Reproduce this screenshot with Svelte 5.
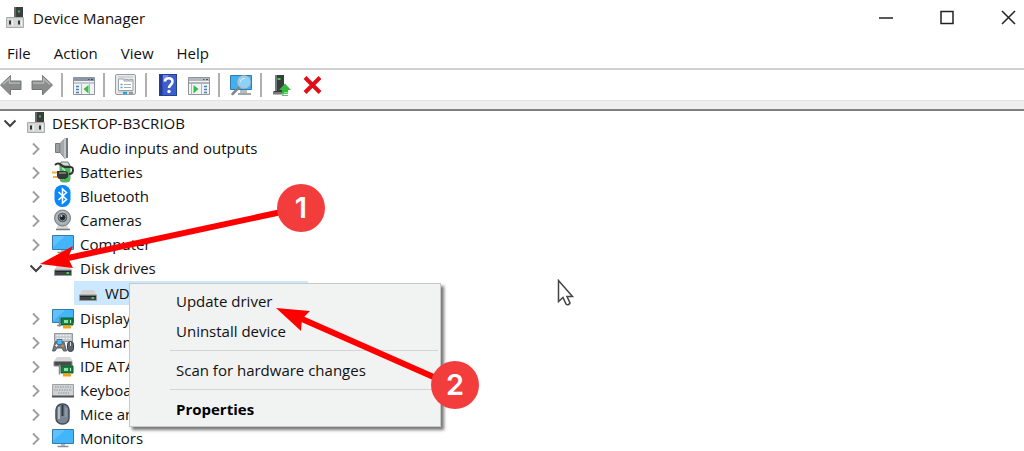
<script>
  // Device tree with the context menu open on the selected disk,
  // plus the two numbered steps drawn on top.
  const menus = ['File', 'Action', 'View', 'Help'];

  const tools = [
    { icon: 'back', label: 'Back' },
    { icon: 'forward', label: 'Forward' },
    null,
    { icon: 'console', label: 'Show or hide console tree' },
    null,
    { icon: 'props', label: 'Properties' },
    null,
    { icon: 'help', label: 'Help' },
    { icon: 'action', label: 'Show or hide action pane' },
    null,
    { icon: 'scan', label: 'Scan for hardware changes' },
    null,
    { icon: 'update', label: 'Update driver' },
    { icon: 'remove', label: 'Uninstall device' }
  ];

  let groups = $state([
    { icon: 'audio', name: 'Audio inputs and outputs' },
    { icon: 'battery', name: 'Batteries' },
    { icon: 'bluetooth', name: 'Bluetooth' },
    { icon: 'camera', name: 'Cameras' },
    { icon: 'computer', name: 'Computer' },
    { icon: 'disk', name: 'Disk drives', open: true, devices: ['WD'] },
    { icon: 'display', name: 'Display' },
    { icon: 'hid', name: 'Human' },
    { icon: 'ide', name: 'IDE ATA' },
    { icon: 'keyboard', name: 'Keyboards' },
    { icon: 'mouse', name: 'Mice and' },
    { icon: 'computer', name: 'Monitors' }
  ]);

  let rootOpen = $state(true);
</script>

{#snippet chevron(open)}
  <svg class="chevron" class:open width="14" height="14" viewBox="0 0 14 14" aria-hidden="true">
    {#if open}
      <path d="M1.500 4.500 7 10l5.500-5.500" />
    {:else}
      <path d="M4 2.500 9.500 8 4 13.500" />
    {/if}
  </svg>
{/snippet}

{#snippet board()}
  <path d="M9 11h12v7H9z" fill="#15803f" stroke="#0d5b2b" />
  <path d="M11 18.500h8v3h-8z" fill="#f2a11c" />
  <path d="M7.500 9.500v10" stroke="#888" stroke-width="1.500" />
  <path d="M12 13h4v3h-4z" fill="#8fe0a8" />
  <path d="M18.500 13v3" stroke="#bff0cc" />
{/snippet}

{#snippet icon(name)}
  <svg class="icon" width="22" height="22" viewBox="0 0 22 22" fill="none" aria-hidden="true">
    {#if name === 'root'}
      <path d="M10 0h9v11h-9z" fill="#3b3d3f" />
      <path d="M10 0h2v11h-2z" fill="#66696b" />
      <path d="M14 3.500h2v2h-2z" fill="#31c34a" />
      <path d="M2.500 10.500h17v10h-17z" fill="#d5d7d7" stroke="#a9abac" />
      <path d="M5 13.500h2v4H5zM14 13.500h2v4h-2z" fill="#333" />
      <path d="M8 13h1v6H8zM17 13h1v6h-1z" fill="#f4f4f4" />
    {:else if name === 'back' || name === 'forward'}
      <g transform={name === 'forward' ? 'matrix(-1 0 0 1 22 0)' : undefined}>
        <path d="M.5 11 10.500 1.500v5.500H21v8.500H10.500V21z" fill="#8b8d8d" stroke="#747676" />
        <path d="M3 10.500 9.500 4.500V9H20" stroke="#b5b7b7" stroke-width="1.500" />
      </g>
    {:else if name === 'console'}
      <path d="M.5 3.500h21v17H.5z" fill="#f2f3f4" stroke="#8e949a" />
      <path d="M1 4h20v3H1z" fill="#8896a6" />
      <path d="M15 5.500h1.500M18 5.500h2" stroke="#314e73" />
      <path d="M1 9h20" stroke="#c3c9ce" stroke-width="2" />
      <path d="M8.500 10v10M16.500 10v10" stroke="#b0b5b9" />
      <path d="M3 12.500h3M3 15.500h3M3 18.500h3" stroke="#477fb4" stroke-width="1.500" />
      <path d="M15.500 11v8.500L10.500 15z" fill="#31bf45" />
    {:else if name === 'action'}
      <path d="M.5 3.500h21v17H.5z" fill="#f2f3f4" stroke="#8e949a" />
      <path d="M1 4h20v3H1z" fill="#b3b9bf" />
      <path d="M15 5.500h1.500M18 5.500h2" stroke="#4e5a67" />
      <path d="M1 9h20" stroke="#aeb5bb" stroke-width="2" />
      <path d="M3.500 10v10M13.500 10v10" stroke="#b0b5b9" />
      <path d="M16 12.500h3M16 15.500h3M16 18.500h3" stroke="#477fb4" stroke-width="1.500" />
      <path d="M5.500 11v8.500l5-4.500z" fill="#31bf45" />
    {:else if name === 'props'}
      <rect x=".500" y=".500" width="20" height="20" rx="1.500" fill="#e8e9ea" stroke="#999d9f" />
      <path d="M3 3h15M3 18h15" stroke="#bdc1c3" />
      <path d="M3.500 7V5H9v2h9v9.500H3.500z" fill="#fff" stroke="#9ba1a5" />
      <path d="M9.500 5.500h4v1.500M14 5.500h4v1.500" stroke="#a7acb0" />
      <path d="M5.500 10.500h2M5.500 13.500h2" stroke="#44a4e8" stroke-width="1.500" />
      <path d="M9 10.500h7M9 13.500h7" stroke="#aaa" />
      <path d="M8 19h4" stroke="#23a5ef" stroke-width="2.500" />
      <path d="M14 19h4" stroke="#999" stroke-width="2" />
    {:else if name === 'help'}
      <rect x="2.500" y=".500" width="17" height="21" fill="#3d5fcb" stroke="#263f98" />
      <path d="M3 1h2.500v20H3z" fill="#233a96" />
      <path d="M6 1h6l-6 8z" fill="#718ae0" />
      <path d="M8 7.500C8 3 15.500 3 15.500 7.500c0 3-3.500 3.500-3.500 6.500" stroke="#fff" stroke-width="2.500" />
      <circle cx="12" cy="17.500" r="1.700" fill="#fff" />
    {:else if name === 'scan'}
      <path d="M.5 1.500h21v14H.5z" fill="#3fb1f1" stroke="#3479aa" />
      <path d="M10 16h7v3h-7z" fill="#b7bdc1" />
      <path d="M8 20h13" stroke="#a0a7ac" stroke-width="2" />
      <path d="m9.500 13-7 7" stroke="#7d8990" stroke-width="2.500" stroke-linecap="round" />
      <circle cx="14" cy="8" r="6" fill="#8dd3f8" stroke="#b2c4ce" stroke-width="1.500" />
      <path d="M10.500 8c0-2.500 2-3.500 4-3.500" stroke="#def5ff" />
    {:else if name === 'update'}
      <path d="M3 1h9v19H1.500v-3H3z" fill="#393b3c" />
      <path d="M3 1h2v16H3zM1 18h11v2.500H1z" fill="#777a7b" />
      <path d="M5.500 4h3v2h-3z" fill="#39d44e" />
      <path d="m13 9.500 6 6.500h-3v2.500h-6V16H7z" fill="#35b83e" />
      <path d="M10 19.500h6M10 21.500h6" stroke="#54cb58" />
    {:else if name === 'remove'}
      <path d="m2 3.500 15 15M17 3.500l-15 15" stroke="#e00e18" stroke-width="4" />
    {:else if name === 'audio'}
      <path d="M3.500 6.500H8v9H3.500z" fill="#9b9fa1" stroke="#777a7c" />
      <path d="m8 6.500 5-5v20l-5-6z" fill="#a5a9ab" stroke="#85898b" />
      <path d="M13 1.500v19" stroke="#c4c7c9" stroke-width="2" />
      <path d="M15 1v20" stroke="#74797d" stroke-width="2" />
    {:else if name === 'battery'}
      <rect x="8" y="2" width="10" height="19" rx="3" fill="#44b957" stroke="#71a379" />
      <path d="M9 1h7l2 4H8z" fill="#d4dcd4" stroke="#6c786e" />
      <path d="M10 7c4 2 5 7 1 11" stroke="#b0eab8" stroke-width="1.500" />
      <path d="M3 4c4-4 6 1 10 2 5 0 8-1 8 3 0 3-2 4-4 4" stroke="#303432" stroke-width="2" />
      <path d="M5 10h8c4 0 5 7 0 8H8c-2 0-3-2-3-3z" fill="#343836" />
      <path d="M7 12h7" stroke="#858b87" stroke-width="1.500" />
      <path d="M0 11.500h5M1 16h4" stroke="#eab052" stroke-width="2" />
    {:else if name === 'bluetooth'}
      <rect x="2.500" y="0" width="16" height="22" rx="7.500" fill="#0888fa" />
      <path d="m6.500 7 8 7.500-4 3.500V4l4 3.500-8 7.500" stroke="#fff" stroke-width="1.500" />
    {:else if name === 'camera'}
      <path d="m6 16-2 4.500h13L15 16z" fill="#d6d8d9" />
      <path d="M4 20.500h14" stroke="#767b7e" stroke-width="1.500" />
      <circle cx="10.500" cy="9" r="8" fill="#a6abaf" stroke="#767c80" />
      <circle cx="10.500" cy="8.500" r="5.500" fill="#596167" stroke="#d4d7d9" />
      <circle cx="10.500" cy="8.500" r="3.300" fill="#20272d" stroke="#8b979e" />
      <circle cx="9.500" cy="7" r="1" fill="#c6d4dd" />
    {:else if name === 'computer'}
      <path d="M.5 2.500h21v14H.5z" fill="#43b5fb" stroke="#357ba8" />
      <path d="M1 3h12L1 14z" fill="#75ccff" opacity=".600" />
      <path d="M9 17h4v2H9z" fill="#b4bbc0" />
      <path d="M5.500 19.500h11" stroke="#879199" stroke-width="1.500" />
    {:else if name === 'disk'}
      <path d="M5 8h12l2.500 5h-17z" fill="#d0d2d3" />
      <path d="M2.500 13h17v5.500h-17z" fill="#414446" stroke="#999c9e" />
      <path d="M3 14.500h16" stroke="#222629" />
      <path d="M14.500 16h2.500" stroke="#3bd451" stroke-width="2" />
    {:else if name === 'display'}
      <path d="M.5 2.500h21v13H.5z" fill="#43b5fb" stroke="#357ba8" />
      <path d="M1 3h12L1 14z" fill="#75ccff" opacity=".600" />
      <path d="M5 18.500h4" stroke="#879199" stroke-width="1.500" />
      {@render board()}
    {:else if name === 'hid'}
      <path d="M2.500 2.500h18v8h-18z" fill="#c1c5c8" stroke="#949a9e" />
      <path d="M4.500 4.500h14M4.500 7.500h14" stroke="#eff1f2" stroke-dasharray="2 1" stroke-width="1.500" />
      <path d="M3 11h9l2.500 9h-3L10 17H5l-2 3H.5z" fill="#73797f" stroke="#596168" />
      <path d="M5 8.500h5v5H5z" fill="#58b8ef" stroke="#367da7" />
      <path d="M3 14.500h3M4.500 13v3" stroke="#dce0e3" />
      <circle cx="10.500" cy="15" r="1.300" fill="#e78232" />
      <rect x="15.500" y="10.500" width="6" height="10" rx="3" fill="#59636d" stroke="#343b42" />
      <path d="M18.500 11v4" stroke="#d1d6da" />
    {:else if name === 'ide'}
      <path d="M5 2h13l3 4H2z" fill="#d6d8d8" />
      <path d="M2 6.500h18v4.500H2z" fill="#494c4e" stroke="#8c8f90" />
      {@render board()}
    {:else if name === 'keyboard'}
      <path d="M.5 5.500h21v12H.5z" fill="#d0d3d6" stroke="#9ca1a5" />
      <path d="M3 8h16M2 11h18M6 14h11" stroke="#a3a9ae" stroke-dasharray="1.500 1" stroke-width="1.500" />
      <path d="M0 17.500h22" stroke="#4c5155" stroke-width="2" />
    {:else if name === 'mouse'}
      <rect x="4" y="1" width="13" height="20" rx="6" fill="#7a8594" stroke="#434c57" stroke-width="1.500" />
      <path d="M7 4v12" stroke="#b5bfca" stroke-width="2" />
      <path d="M10.500 2v11" stroke="#303842" stroke-width="2" />
      <path d="M14 5v9" stroke="#a0abb8" />
    {/if}
  </svg>
{/snippet}

<main class="window">
  <header class="title-bar">
    {@render icon('root')}
    <h1>Device Manager</h1>
    <div class="controls">
      <button aria-label="Minimize"><svg width="16" height="16" viewBox="0 0 16 16"><path d="M1 8h14" /></svg></button>
      <button aria-label="Maximize"><svg width="16" height="16" viewBox="0 0 16 16"><path d="M2 1.500h12v12H2z" /></svg></button>
      <button aria-label="Close"><svg width="16" height="16" viewBox="0 0 16 16"><path d="m2 1 13 13M15 1 2 14" /></svg></button>
    </div>
  </header>

  <nav class="menu-bar">
    {#each menus as menu}
      <button>{menu}</button>
    {/each}
  </nav>

  <div class="toolbar" role="toolbar" aria-label="Device actions">
    {#each tools as tool}
      {#if tool}
        <button aria-label={tool.label}>{@render icon(tool.icon)}</button>
      {:else}
        <span class="divider"></span>
      {/if}
    {/each}
  </div>
  <div class="strip"></div>

  <section class="tree">
    <div class="row">
      <button class="toggle" aria-label="Toggle computer" aria-expanded={rootOpen} onclick={() => (rootOpen = !rootOpen)}>
        {@render chevron(rootOpen)}
      </button>
      {@render icon('root')}
      <span>DESKTOP-B3CRIOB</span>
    </div>
    {#if rootOpen}
      <ul class="groups">
        {#each groups as group}
          <li>
            <div class="row">
              <button class="toggle" aria-label="Toggle {group.name}" aria-expanded={!!group.open} onclick={() => (group.open = !group.open)}>
                {@render chevron(group.open)}
              </button>
              {@render icon(group.icon)}
              <span>{group.name}</span>
            </div>
            {#if group.open && group.devices}
              <ul class="devices">
                {#each group.devices as device}
                  <li><button class="row device">{@render icon(group.icon)}<span>{device}</span></button></li>
                {/each}
              </ul>
            {/if}
          </li>
        {/each}
      </ul>
    {/if}
  </section>

  <div class="context-menu" role="menu">
    <button role="menuitem">Update driver</button>
    <button role="menuitem">Uninstall device</button>
    <hr />
    <button role="menuitem">Scan for hardware changes</button>
    <hr />
    <button role="menuitem" class="default">Properties</button>
  </div>

  <svg class="arrows" width="480" height="410" viewBox="0 0 480 410" aria-hidden="true">
    <path d="M68 258 300 208M302 319l152 67" stroke="#f00" stroke-width="6" />
    <path d="m40 264 33-18-5 12 5 10zM276 308l34 3-8 8-1 12z" fill="#f00" />
  </svg>
  <span class="step one">1</span>
  <span class="step two">2</span>

  <svg class="cursor" width="18" height="28" viewBox="0 0 18 28" aria-hidden="true">
    <path d="M1.500 1.500v21l4.500-4 3 6.500q2 2 4-1l-3-6.500h5.500z" />
  </svg>
</main>

<style>
  :global(body) { margin: 0; background: #fff; }
  .window {
    position: relative; overflow: hidden; background: #fff; color: #111;
    font-family: "Open Sans", "Noto Sans", sans-serif; font-size: 15px; line-height: 24px;
  }
  button {
    font: inherit; color: inherit; background: none; border: 0; padding: 0; margin: 0;
  }
  ul { list-style: none; margin: 0; padding: 0; }
  .icon { display: block; flex: none; }

  .title-bar { display: flex; align-items: center; gap: 7px; height: 35px; padding-left: 4px; }
  h1 { font-size: 15px; font-weight: 400; margin: 0; }
  .controls { display: flex; gap: 29px; margin-left: auto; }
  .controls button { display: grid; place-items: center; width: 32px; height: 32px; }
  .controls path { fill: none; stroke: #222; stroke-width: 1.5; }

  .menu-bar { display: flex; gap: 23px; padding: 6px 7px 3px; }
  .toolbar {
    display: flex; align-items: center; gap: 9px; height: 30px;
    border-top: 2px solid #d0d0d0;
  }
  .divider { width: 2px; height: 24px; margin: 0 1px 0 -1px; background: #b0b0b0; }
  .strip {
    height: 8px; background: #eee;
    border-top: 1px solid #e2e2e2; border-bottom: 2px solid #808080;
  }

  .row { display: flex; align-items: center; gap: 5px; height: 24px; white-space: nowrap; }
  .toggle { display: grid; place-items: center; width: 20px; height: 24px; }
  .chevron { fill: none; stroke: #a0a0a0; stroke-width: 2; }
  .chevron.open { stroke: #404040; }
  .groups { padding-left: 26px; margin-top: 1px; }
  .groups .row { gap: 6px; }
  .devices { padding-left: 48px; margin: 1px 0; }
  .device { width: 234px; padding-left: 3px; background: #cce8ff; text-align: left; }

  .context-menu {
    position: absolute; left: 129px; top: 283px; width: 312px; box-sizing: border-box;
    padding: 2px; background: #f1f2f2; border: 1px solid #c8c8c8;
    box-shadow: 3px 3px 3px #777;
  }
  .context-menu button { display: block; width: 100%; height: 30px; padding-left: 44px; text-align: left; }
  .context-menu .default { font-weight: 700; color: #000; }
  hr { height: 1px; margin: 4px 0 4px 38px; border: 0; background: #d4d4d4; }

  .arrows { position: absolute; left: 0; top: 0; pointer-events: none; }
  .step {
    position: absolute; width: 48px; height: 48px; border-radius: 50%;
    background: #f33d3d; color: #fff; text-align: center;
    font: 600 29px/48px Inter, "Liberation Sans", sans-serif;
  }
  .one { left: 277px; top: 184px; }
  .two { left: 431px; top: 361px; }
  .cursor { position: absolute; left: 557px; top: 279px; }
  .cursor path { fill: #fff; stroke: #444; stroke-width: 1.5; }
</style>
